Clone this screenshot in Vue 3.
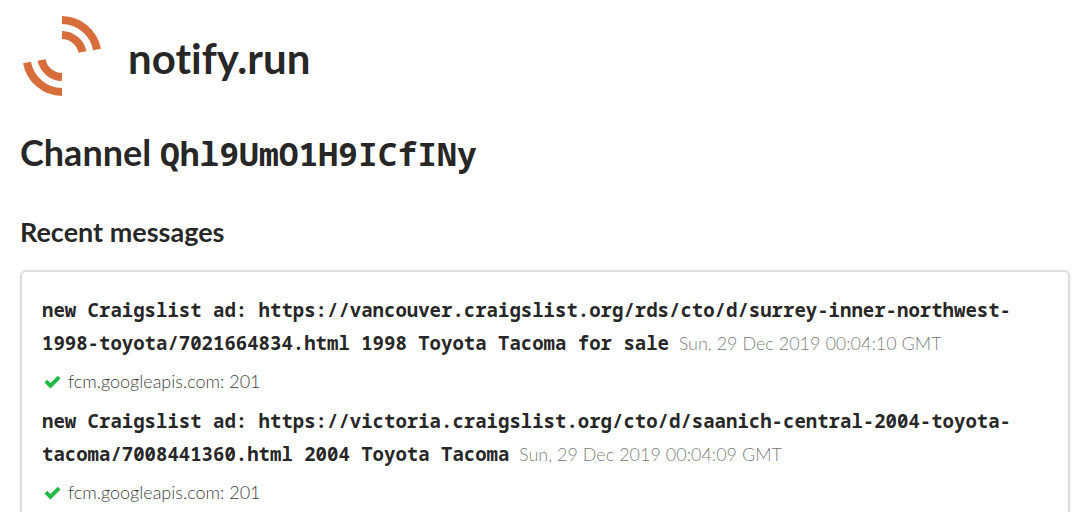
<script setup>
const messages = [
  {
    text: 'new Craigslist ad: https://vancouver.craigslist.org/rds/cto/d/surrey-inner-northwest-1998-toyota/7021664834.html 1998 Toyota Tacoma for sale',
    time: 'Sun, 29 Dec 2019 00:04:10 GMT',
    result: 'fcm.googleapis.com: 201',
  },
  {
    text: 'new Craigslist ad: https://victoria.craigslist.org/cto/d/saanich-central-2004-toyota-tacoma/7008441360.html 2004 Toyota Tacoma',
    time: 'Sun, 29 Dec 2019 00:04:09 GMT',
    result: 'fcm.googleapis.com: 201',
  },
]
</script>

<template>
  <main class="page">
    <header class="brand">
      <svg class="logo" viewBox="0 0 84 84" aria-hidden="true">
        <g fill="none" stroke="#d76d3b" stroke-width="8">
          <path d="M42 6A36 36 0 0 1 77 35.500" />
          <path d="M42 21A21.500 21.500 0 0 1 62.500 38" />
          <path d="M42 78A36 36 0 0 1 7 48.500" />
          <path d="M42 63A21.500 21.500 0 0 1 21.500 46" />
        </g>
      </svg>
      <h1>notify.run</h1>
    </header>
    <h2>Channel <code>Qhl9UmO1H9ICfINy</code></h2>
    <h3>Recent messages</h3>
    <section class="segment">
      <article v-for="m in messages" :key="m.time" class="message">
        <p class="text"><code>{{ m.text }}</code> <time>{{ m.time }}</time></p>
        <p class="result">
          <svg class="check" viewBox="0 0 18 14" aria-hidden="true">
            <path d="M0.500 7.500L3.200 4.800L6.500 8L13.800 0.800L16.500 3.500L6.500 13.500Z" fill="#21ba45" />
          </svg>
          <span>{{ m.result }}</span>
        </p>
      </article>
    </section>
  </main>
</template>

<style>
body {
  margin: 0;
  height: 100vh;
  overflow: hidden;
  background: #fff;
}
</style>

<style scoped>
.page {
  padding: 14px 21px 0 20px;
  font-family: Lato, "Liberation Sans", sans-serif;
  font-variant-ligatures: none;
  color: rgba(0, 0, 0, 0.87);
}
.brand {
  display: flex;
  align-items: center;
  gap: 24px;
}
.logo {
  width: 84px;
  height: 84px;
}
h1,
h2,
h3 {
  margin: 0;
  font-weight: 700;
}
h1 {
  padding-top: 4px;
  font-size: 42px;
  line-height: 54px;
}
h2 {
  margin-top: 32px;
  font-size: 36px;
  line-height: 44px;
}
code {
  font-family: Consolas, "Noto Sans Mono", "DejaVu Sans Mono", "Liberation Mono", monospace;
  font-weight: 700;
  line-height: 1;
}
h2 code {
  font-size: 33px;
}
h3 {
  margin-top: 41px;
  font-size: 27px;
  line-height: 34px;
}
.segment {
  margin-top: 21px;
  padding: 22px 20px;
  border: 2px solid #dededf;
  border-radius: 6px;
  box-shadow: 0 1px 3px rgba(34, 36, 38, 0.12);
}
p {
  margin: 0;
}
.text {
  font-size: 18px;
  line-height: 33px;
}
.text code {
  font-size: 19px;
}
time {
  margin-left: 5px;
  font-weight: 300;
  line-height: 1;
  color: rgba(0, 0, 0, 0.56);
}
.result {
  display: flex;
  align-items: center;
  gap: 6px;
  padding: 7px 0 9px 2px;
  font-size: 18px;
  font-weight: 300;
  line-height: 29px;
  color: rgba(0, 0, 0, 0.8);
}
.check {
  width: 18px;
  height: 14px;
}
</style>
